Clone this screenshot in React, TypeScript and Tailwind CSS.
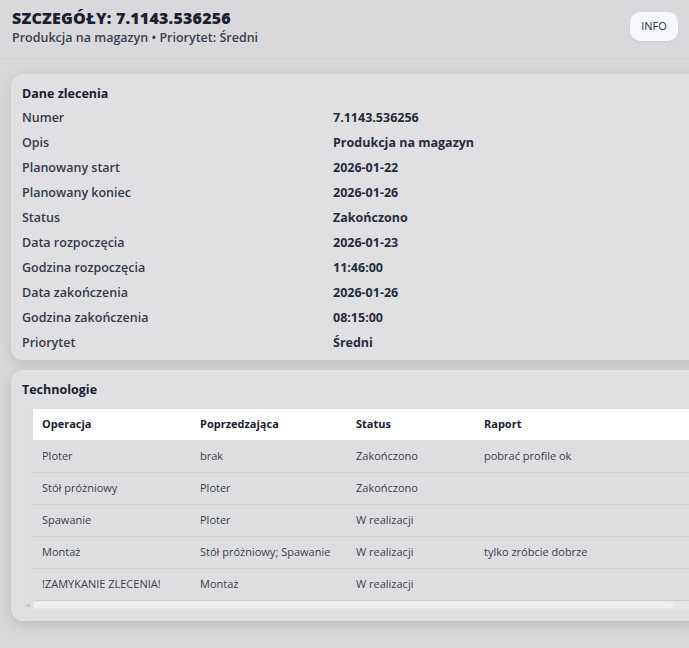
import React from "react";

const details: [string, string][] = [
  ["Numer", "7.1143.536256"],
  ["Opis", "Produkcja na magazyn"],
  ["Planowany start", "2026-01-22"],
  ["Planowany koniec", "2026-01-26"],
  ["Status", "Zakończono"],
  ["Data rozpoczęcia", "2026-01-23"],
  ["Godzina rozpoczęcia", "11:46:00"],
  ["Data zakończenia", "2026-01-26"],
  ["Godzina zakończenia", "08:15:00"],
  ["Priorytet", "Średni"],
];

const ops = [
  { op: "Ploter", prev: "brak", status: "Zakończono", report: "pobrać profile ok" },
  { op: "Stół próżniowy", prev: "Ploter", status: "Zakończono", report: "" },
  { op: "Spawanie", prev: "Ploter", status: "W realizacji", report: "" },
  { op: "Montaż", prev: "Stół próżniowy; Spawanie", status: "W realizacji", report: "tylko zróbcie dobrze" },
  { op: "!ZAMYKANIE ZLECENIA!", prev: "Montaż", status: "W realizacji", report: "" },
];

export default function App() {
  return (
    <div
      className="min-h-[648px] w-[689px] overflow-hidden bg-[#d9d9dc] text-[#1d2233]"
      style={{ fontFamily: '"Open Sans", "Noto Sans", sans-serif' }}
    >
      {/* Header */}
      <header className="flex items-start justify-between border-b border-[#d2d2d5] px-3 pt-[7px] pb-[11px]">
        <div>
          <h1 className="text-[16px] font-extrabold leading-[22px] tracking-[0.2px] text-[#1b2030]">
            SZCZEGÓŁY: 7.1143.536256
          </h1>
          <p className="text-[12.5px] font-semibold leading-[18px] text-[#3b404c]">
            Produkcja na magazyn • Priorytet: Średni
          </p>
        </div>
        <button className="mt-[5px] mr-[-1px] h-[29px] w-[48px] rounded-[10px] bg-[#f5f7fc] text-[11px] text-[#2b2f3a] shadow-[0_1px_2px_rgba(0,0,0,0.06)]">
          INFO
        </button>
      </header>

      <main className="flex flex-col gap-[10px] pl-[11px] pt-[15px]">
        {/* Dane zlecenia */}
        <section className="w-[700px] rounded-[12px] bg-[#e0e0e3] px-[11px] pt-[11px] pb-[4px] shadow-[0_4px_14px_rgba(0,0,0,0.12)]">
          <h2 className="text-[12.5px] font-bold leading-[18px] text-[#1b2030]">Dane zlecenia</h2>
          <dl className="mt-[3px]">
            {details.map(([k, v]) => (
              <div key={k} className="flex h-[25px] items-center text-[12.5px] font-semibold">
                <dt className="w-[311px] text-[#353a47]">{k}</dt>
                <dd className="font-bold text-[#262b3a]">{v}</dd>
              </div>
            ))}
          </dl>
        </section>

        {/* Technologie */}
        <section className="w-[700px] rounded-[12px] bg-[#e0e0e3] px-[11px] pt-[11px] pb-[11px] shadow-[0_4px_14px_rgba(0,0,0,0.14)]">
          <h2 className="text-[12.5px] font-bold leading-[18px] text-[#1b2030]">Technologie</h2>
          <div className="mt-[10px] overflow-hidden rounded-tl-[8px] bg-[#dedee1] pl-[11px]">
            <table className="w-full table-fixed border-collapse text-left text-[11px] text-[#3a3f4b]">
              <thead>
                <tr className="h-[31px] bg-white text-[#1b2030]">
                  <th className="w-[167px] pl-[9px] font-bold">Operacja</th>
                  <th className="w-[156px] font-bold">Poprzedzająca</th>
                  <th className="w-[128px] font-bold">Status</th>
                  <th className="font-bold">Raport</th>
                </tr>
              </thead>
              <tbody>
                {ops.map((r) => (
                  <tr key={r.op} className="h-[32px] border-b border-[#cfcfd3]">
                    <td className="pl-[9px]">{r.op}</td>
                    <td>{r.prev}</td>
                    <td>{r.status}</td>
                    <td>{r.report}</td>
                  </tr>
                ))}
              </tbody>
            </table>
            {/* scrollbar */}
            <div className="flex h-[9px] items-center gap-[3px] bg-[#e6e6e9] pr-[26px]">
              <span className="ml-[-8px] text-[6px] leading-none text-[#c4c4c8]">◀</span>
              <div className="h-[6px] flex-1 rounded-full bg-[#eeeef0]" />
            </div>
          </div>
        </section>
      </main>
    </div>
  );
}
